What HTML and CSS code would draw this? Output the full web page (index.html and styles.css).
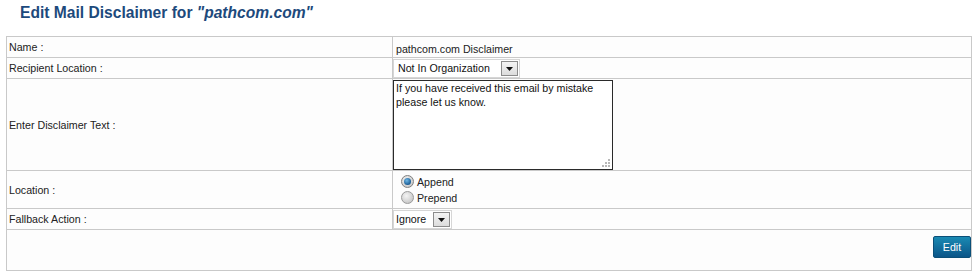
FILE: index.html
```html
<!DOCTYPE html>
<html>
<head>
<meta charset="utf-8">
<link rel="stylesheet" href="styles.css">
</head>
<body>
<div class="page">
  <h1 class="title">Edit Mail Disclaimer for <em>"pathcom.com"</em></h1>
  <div class="form">
    <div class="label">Name :</div>
    <div class="value"><span class="text">pathcom.com Disclaimer</span></div>

    <div class="label">Recipient Location :</div>
    <div class="value">
      <div class="select sel-wide">
        <span class="sel-text">Not In Organization</span>
        <span class="sel-btn"><svg width="7" height="4" viewBox="0 0 7 4"><path d="M0 0h7L3.5 4z" fill="#111"/></svg></span>
      </div>
    </div>

    <div class="label">Enter Disclaimer Text :</div>
    <div class="value">
      <div class="textarea">If you have received this email by mistake please let us know.<span class="grip"><svg width="10" height="10" viewBox="0 0 10 10" fill="#b8b8b8"><rect x="7" y="1" width="2" height="2"/><rect x="4" y="4" width="2" height="2"/><rect x="7" y="4" width="2" height="2"/><rect x="1" y="7" width="2" height="2"/><rect x="4" y="7" width="2" height="2"/><rect x="7" y="7" width="2" height="2"/></svg></span></div>
    </div>

    <div class="label">Location :</div>
    <div class="value radios">
      <div class="radio-row"><span class="radio checked"></span><span>Append</span></div>
      <div class="radio-row"><span class="radio"></span><span>Prepend</span></div>
    </div>

    <div class="label">Fallback Action :</div>
    <div class="value">
      <div class="select sel-small">
        <span class="sel-text">Ignore</span>
        <span class="sel-btn"><svg width="7" height="4" viewBox="0 0 7 4"><path d="M0 0h7L3.5 4z" fill="#111"/></svg></span>
      </div>
    </div>

    <div class="actions"><button class="btn">Edit</button></div>
  </div>
</div>
</body>
</html>
```
FILE: styles.css
```css
* { box-sizing: border-box; }
html, body { margin: 0; padding: 0; background: #fff; }
body {
  font-family: "Liberation Sans", Arial, sans-serif;
  font-size: 10.667px;
  color: #222;
  width: 978px;
  height: 277px;
  overflow: hidden;
}
.page { padding: 0 6px; }
.title {
  margin: 0;
  height: 36px;
  padding: 4px 0 0 14px;
  font-size: 15.6px;
  line-height: 18px;
  font-weight: bold;
  color: #1d4a7c;
}
.title em { font-style: italic; }

.form {
  display: grid;
  grid-template-columns: 386px 579px;
  grid-template-rows: 21px 21px 92px 38px 21px 41px;
  border-top: 1px solid #c9c9c9;
  border-left: 1px solid #c9c9c9;
  width: 966px;
  background: #fdfdfd;
}
.label, .value, .actions {
  border-right: 1px solid #c9c9c9;
  border-bottom: 1px solid #c9c9c9;
}
.label {
  display: flex;
  align-items: center;
  padding: 0 0 0 2px;
  color: #222;
}
.value {
  display: flex;
  align-items: center;
  padding: 0;
}
.value .text { padding: 3px 0 0 3px; }

.select {
  display: flex;
  align-items: center;
  justify-content: space-between;
  height: 19px;
  border: 1px solid #d6d6d6;
  background: #fff;
  padding: 0 1px 0 4px;
  color: #111;
}
.sel-wide { width: 127px; }
.sel-small { width: 59px; padding-left: 2px; }
.sel-btn {
  width: 17px;
  height: 15px;
  border: 1px solid #8c8c8c;
  background: linear-gradient(#f4f4f4, #dcdcdc);
  display: flex;
  align-items: center;
  justify-content: center;
  padding-top: 1px;
}
.sel-btn svg { display: block; }

.value:nth-child(6) { align-items: flex-start; padding-top: 1px; }
.textarea {
  position: relative;
  width: 220px;
  height: 90px;
  border: 1px solid #2a2a2a;
  background: #fff;
  padding: 0 2px;
  line-height: 14px;
  color: #111;
}
.grip { position: absolute; right: 1px; bottom: 1px; line-height: 0; }

.radios {
  flex-direction: column;
  align-items: flex-start;
  justify-content: center;
  padding-left: 8px;
  gap: 3px;
}
.radio-row { display: flex; align-items: center; gap: 3px; height: 13px; color: #222; }
.radio {
  width: 13px;
  height: 13px;
  border-radius: 50%;
  border: 1px solid #9a9a9a;
  background: radial-gradient(circle at 40% 35%, #f4f4f4, #c4c4c4 85%);
  position: relative;
}
.radio.checked { border-color: #808080; }
.radio.checked::after {
  content: "";
  position: absolute;
  left: 2px;
  top: 2px;
  width: 7px;
  height: 7px;
  border-radius: 50%;
  background: radial-gradient(circle at 40% 35%, #6fb8e6, #14568f 75%);
}

.actions {
  grid-column: 1 / 3;
  display: flex;
  justify-content: flex-end;
  align-items: flex-start;
  padding: 6px 0 0 0;
}
.btn {
  width: 38px;
  height: 22px;
  border: 1px solid #0b4f78;
  border-radius: 2px;
  background: linear-gradient(#1a8ab3, #0b5588);
  color: #fff;
  font-family: "Liberation Sans", Arial, sans-serif;
  font-size: 10.667px;
  padding: 0;
  margin: 0;
}
```
